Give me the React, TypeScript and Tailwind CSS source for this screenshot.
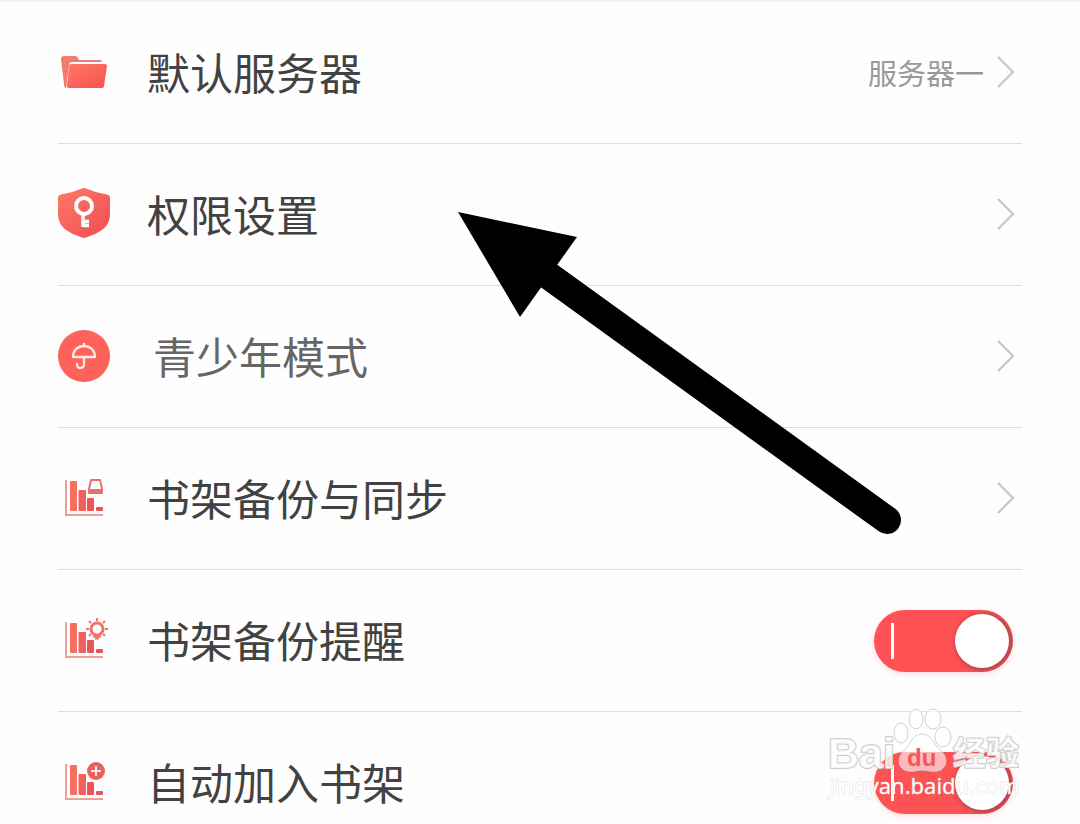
import { useState, type ReactNode } from "react";

function FolderIcon() {
  return (
    <svg viewBox="0 0 52 52" className="size-[52px]" aria-hidden="true">
      <defs>
        <linearGradient id="folder" x1="0" y1="0" x2="1" y2="1">
          <stop offset="0" stopColor="#ff7a68" />
          <stop offset="1" stopColor="#f9504f" />
        </linearGradient>
      </defs>
      <path d="M3 13Q3 10 6 10H17Q19 10 20 12L21 14H42Q44 14 44 16H14Q11 16 11 19L8 42Q6 42 6 38Z" fill="#f47c6e" />
      <path d="M13 18H47Q49 18 49 20L46 40Q46 42 43 42H11Q8 42 9 39L11 20Q11 18 13 18Z" fill="url(#folder)" />
    </svg>
  );
}

function ShieldIcon() {
  return (
    <svg viewBox="0 0 52 52" className="size-[52px]" aria-hidden="true">
      <defs>
        <linearGradient id="shield" x1="0" y1="0" x2="1" y2="1">
          <stop offset="0" stopColor="#ff7a66" />
          <stop offset="1" stopColor="#f04c50" />
        </linearGradient>
      </defs>
      <path d="M24 .6Q26 -.4 28 .6Q38 5 49 6.500Q52 7 52 10V28Q51 37 44 42Q37 47 28 49.500Q26 50 24 49.500Q15 47 8 42Q1 37 0 28V10Q0 7 3 6.500Q14 5 24 .6Z" fill="url(#shield)" />
      <circle cx="26" cy="18" r="8" fill="none" stroke="#fff" strokeWidth="4" />
      <path d="M25 26V39M25 33.500H31M25 37.500H31" fill="none" stroke="#fff" strokeWidth="3.500" />
    </svg>
  );
}

function UmbrellaIcon() {
  return (
    <svg viewBox="0 0 52 52" className="size-[52px]" aria-hidden="true">
      <circle cx="26" cy="26" r="26" fill="#fd625b" />
      <path
        d="M15 27C15 20 20 16 26 16S37 20 37 27ZM26 14V16M26 27V34Q26 38 22 38Q19 38 19 34"
        fill="none"
        stroke="#ffe9e4"
        strokeWidth="2.300"
        strokeLinecap="round"
        strokeLinejoin="round"
      />
    </svg>
  );
}

function ShelfIcon({ children }: { children: ReactNode }) {
  return (
    <svg viewBox="0 0 52 52" className="size-[52px]" aria-hidden="true">
      <path d="M8 8V43H45" fill="none" stroke="#eda097" strokeWidth="2" />
      <rect x="12" y="9" width="7" height="30" rx="1" fill="#f5705f" />
      <rect x="20.500" y="18" width="7.500" height="21" rx="1" fill="#f0605c" />
      <rect x="29" y="26" width="7" height="13" rx="1" fill="#e95558" />
      <rect x="38" y="35" width="7" height="4" rx="1" fill="#e0585a" />
      {children}
    </svg>
  );
}

function DriveBadge() {
  return (
    <g fill="#fff" stroke="#e9706b" strokeWidth="2" strokeLinejoin="round">
      <path d="M33 8H42L44 17V21H31V17Z" />
      <path d="M31 18.500H44" strokeWidth="3" />
    </g>
  );
}

function BulbBadge() {
  return (
    <g fill="none" stroke="#ec7568" strokeWidth="2">
      <circle cx="39" cy="15" r="6" strokeWidth="3" fill="#fff" />
      <path d="M39 7V4M33 9L31 7M45 9L47 7M31 15H28M47 15H50M33 20L31 22M45 20L47 22M35 22.500H43M37 24.500H41" />
    </g>
  );
}

function PlusBadge() {
  return (
    <g>
      <circle cx="38" cy="15" r="9" fill="#e9615c" />
      <path d="M38 10V20M33 15H43" stroke="#ffe3dd" strokeWidth="2" />
    </g>
  );
}

function Chevron() {
  return (
    <svg viewBox="0 0 20 34" className="h-[34px] w-5" aria-hidden="true">
      <path d="M2 2L17 17L2 32" fill="none" stroke="#c8c8c8" strokeWidth="2.300" />
    </svg>
  );
}

const rowClass =
  "flex h-[142px] w-full items-center border-b border-[#dedede] pb-0.5 text-left text-[43px] leading-[52px] text-[#424242]";

type LinkRowProps = { icon: ReactNode; label: string; value?: string; muted?: boolean };

function LinkRow({ icon, label, value, muted }: LinkRowProps) {
  return (
    <li>
      <button type="button" className={rowClass}>
        {icon}
        <span className={muted ? "flex-1 pb-0.5 pl-[43px] text-[#666]" : "flex-1 pb-0.5 pl-[37px]"}>{label}</span>
        {value && <span className="pr-3 text-[29px] text-[#999]">{value}</span>}
        <span className="pr-1.5">
          <Chevron />
        </span>
      </button>
    </li>
  );
}

function SwitchRow({ icon, label }: { icon: ReactNode; label: string }) {
  const [on, setOn] = useState(true);
  return (
    <li>
      <label className={rowClass}>
        {icon}
        <span className="flex-1 pb-0.5 pl-[37px]">{label}</span>
        <span className="flex pt-0.5 pr-[9px]">
          <input
            type="checkbox"
            role="switch"
            checked={on}
            onChange={(e) => setOn(e.target.checked)}
            className="peer sr-only"
          />
          <span className="flex h-[62px] w-[139px] items-center justify-between overflow-hidden rounded-full bg-[#cfcfcf] pr-1 pl-[17px] shadow-[0_2px_6px_#ff525233] peer-checked:bg-[#ff5254] peer-focus-visible:outline-2">
            <span className="h-9 w-[3px] bg-white" />
            <span className="size-[54px] rounded-full bg-white shadow-[2px_1px_5px_2px_#80404a99]" />
          </span>
        </span>
      </label>
    </li>
  );
}

function Arrow() {
  return (
    <svg
      viewBox="0 0 444 324"
      className="pointer-events-none absolute top-[209px] left-[458px] h-[324px] w-[444px]"
      aria-hidden="true"
    >
      <path d="M0 1L119 26L62 106Z" />
      <path d="M80 57L429 309" stroke="#000" strokeWidth="28" strokeLinecap="round" />
    </svg>
  );
}

function Watermark() {
  return (
    <svg
      viewBox="0 0 200 100"
      className="pointer-events-none absolute top-[702px] left-[824px] h-[100px] w-[200px]"
      role="img"
      aria-label="Baidu 经验"
    >
      <g fill="#fff" fillOpacity="0.6" stroke="#d2d2d2" strokeWidth="1">
        <ellipse cx="77" cy="29" rx="7" ry="10" />
        <ellipse cx="92" cy="15" rx="7" ry="10" />
        <ellipse cx="109" cy="15" rx="8" ry="10" />
        <ellipse cx="119" cy="33" rx="8" ry="10" />
        <path d="M98 30C108 30 109 40 117 47C124 53 124 65 113 67C106 68 104 66 98 66S90 68 84 67C73 65 73 53 80 47C87 40 88 30 98 30Z" />
      </g>
      <g fill="#fff" fillOpacity="0.8" stroke="#cdcdcd" strokeWidth="2" strokeLinejoin="round" paintOrder="stroke">
        <text x="4" y="64" fontSize="43" fontWeight="700" fontFamily="'Liberation Sans', sans-serif">Bai</text>
        <text x="129" y="61" fontSize="33" fontWeight="700" fontFamily="'Noto Sans CJK SC', sans-serif">经验</text>
      </g>
      <text x="83" y="62" fontSize="24" fontWeight="700" fontFamily="'Liberation Sans', sans-serif" fill="#f0585a">du</text>
      <text
        x="5"
        y="90"
        fontSize="22"
        fontFamily="'Noto Sans', sans-serif"
        fill="#fff"
        stroke="#bbb"
        strokeOpacity="0.5"
        strokeWidth="1"
        paintOrder="stroke"
      >
        jingyan.baidu.com
      </text>
    </svg>
  );
}

export default function App() {
  return (
    <main className="relative h-screen overflow-hidden border-t-2 border-[#f3f3f3] bg-[#fefefe] px-[58px] font-['Noto_Sans_CJK_SC',sans-serif]">
      <ul>
        <LinkRow icon={<FolderIcon />} label="默认服务器" value="服务器一" />
        <LinkRow icon={<ShieldIcon />} label="权限设置" />
        <LinkRow icon={<UmbrellaIcon />} label="青少年模式" muted />
        <LinkRow icon={<ShelfIcon><DriveBadge /></ShelfIcon>} label="书架备份与同步" />
        <SwitchRow icon={<ShelfIcon><BulbBadge /></ShelfIcon>} label="书架备份提醒" />
        <SwitchRow icon={<ShelfIcon><PlusBadge /></ShelfIcon>} label="自动加入书架" />
      </ul>
      <Arrow />
      <Watermark />
    </main>
  );
}
